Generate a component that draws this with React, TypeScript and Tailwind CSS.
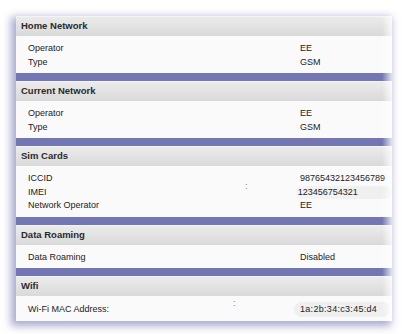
const sections: { title: string; rows: [string, string][]; colon?: string; pill?: number[] }[] = [
  { title: "Home Network", rows: [["Operator", "EE"], ["Type", "GSM"]] },
  { title: "Current Network", rows: [["Operator", "EE"], ["Type", "GSM"]] },
  {
    title: "Sim Cards",
    rows: [["ICCID", "98765432123456789"], ["IMEI", "123456754321"], ["Network Operator", "EE"]],
    colon: "sim",
    pill: [1],
  },
  { title: "Data Roaming", rows: [["Data Roaming", "Disabled"]] },
  { title: "Wifi", rows: [["Wi-Fi MAC Address:", "1a:2b:34:c3:45:d4"]], colon: "wifi", pill: [0] },
];

function Panel({ s }: { s: (typeof sections)[number] }) {
  return (
    <div className="bg-[#fbfafb] border-t border-[#f4f4f4]">
      <div className="h-[19px] pl-[5px] flex items-center bg-gradient-to-b from-[#ebebeb] to-[#d9d9d9] text-[9.5px] font-bold text-[#2a2a2a]">
        {s.title}
      </div>
      <div className="relative pt-[6px] pb-[4px] pl-[12px]">
        {s.colon === "sim" && (
          <span className="absolute left-[229px] top-[14px] text-[9px] text-[#777]">:</span>
        )}
        {s.colon === "wifi" && (
          <span className="absolute left-[217px] top-[1px] text-[9px] text-[#777]">:</span>
        )}
        {s.rows.map(([k, v], i) => {
          const pill = s.pill?.includes(i);
          const mac = s.colon === "wifi";
          return (
            <div key={k} className={`flex items-center ${mac ? "h-[15px]" : "h-[13.5px]"} text-[9px] text-[#222]`}>
              <span className="w-[272px]">{k}</span>
              <span
                className={
                  pill
                    ? mac
                      ? "rounded-full bg-[#f0efef] px-[6px] -ml-[6px] w-[96px] py-[1px] tracking-[0.3px]"
                      : "rounded-full bg-gradient-to-r from-[#f6f5f6] to-[#eeeeee] -ml-[3px] pl-[3px] w-[98px]"
                    : ""
                }
              >
                {v}
              </span>
            </div>
          );
        })}
      </div>
    </div>
  );
}

export default function App() {
  return (
    <div className="w-[407px] h-[334px] bg-white overflow-hidden pt-[16px] pl-[16px] font-['Liberation_Sans',Arial,sans-serif]">
      <div className="relative w-[376px] flex flex-col gap-[8px] bg-[#7276b2] shadow-[-3px_3px_8px_2px_rgba(100,100,170,0.55)]">
        {sections.map((s) => (
          <Panel key={s.title} s={s} />
        ))}
        <div className="absolute right-0 top-0 bottom-0 w-[10px] bg-gradient-to-r from-transparent to-white/80" />
      </div>
    </div>
  );
}
